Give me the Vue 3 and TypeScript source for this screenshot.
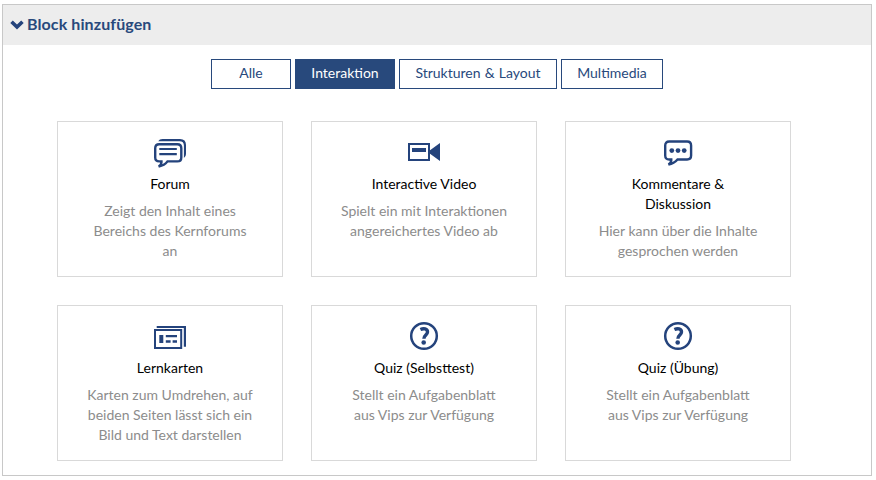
<script setup lang="ts">
import { ref } from 'vue'

type IconName = 'forum' | 'video' | 'comment' | 'cards' | 'quiz'

interface Block {
  title: string
  text: string
  icon: IconName
}

const categories: string[] = ['Alle', 'Interaktion', 'Strukturen & Layout', 'Multimedia']
const active = ref<string>('Interaktion')

const blocks: Block[] = [
  { title: 'Forum', text: 'Zeigt den Inhalt eines Bereichs des Kernforums an', icon: 'forum' },
  { title: 'Interactive Video', text: 'Spielt ein mit Interaktionen angereichertes Video ab', icon: 'video' },
  { title: 'Kommentare & Diskussion', text: 'Hier kann über die Inhalte gesprochen werden', icon: 'comment' },
  { title: 'Lernkarten', text: 'Karten zum Umdrehen, auf beiden Seiten lässt sich ein Bild und Text darstellen', icon: 'cards' },
  { title: 'Quiz (Selbsttest)', text: 'Stellt ein Aufgabenblatt aus Vips zur Verfügung', icon: 'quiz' },
  { title: 'Quiz (Übung)', text: 'Stellt ein Aufgabenblatt aus Vips zur Verfügung', icon: 'quiz' },
]
</script>

<template>
  <section class="panel">
    <header class="panel-header">
      <svg class="chevron" viewBox="0 0 14 10" aria-hidden="true">
        <path d="M0.3 3.1 L2.8 0.6 L7 4.5 L11.2 0.6 L13.7 3.1 L7 9.4 Z" />
      </svg>
      <h1>Block hinzufügen</h1>
    </header>

    <nav class="filters">
      <button
        v-for="category in categories"
        :key="category"
        type="button"
        class="filter"
        :class="{ active: category === active }"
        @click="active = category"
      >{{ category }}</button>
    </nav>

    <div class="grid">
      <article v-for="block in blocks" :key="block.title" class="card">
        <svg class="icon" viewBox="0 0 32 32" aria-hidden="true">
          <g v-if="block.icon === 'forum'">
            <path class="line bold" d="M5.2 7.2 H23.3 Q27.3 7.2 27.3 11.2 V20.4 Q27.3 24.4 23.3 24.4 H13.5 Q10.5 28.5 4.7 29.6 Q7.7 27.5 7.5 24.4 H5.2 Q1.2 24.4 1.2 20.4 V11.2 Q1.2 7.2 5.2 7.2 Z" />
            <path class="solid" d="M4.2 4.2 Q5.5 2 8.5 2 H26 Q32 2 32 8 V17 Q32 19.8 29.9 21 V8.5 Q29.9 4.2 25.5 4.2 Z" />
            <path class="solid" d="M5.3 10.9 H22.8 V13.1 H5.3 Z M5.3 16.1 H22.8 V18.3 H5.3 Z" />
          </g>
          <g v-else-if="block.icon === 'video'">
            <path class="line" d="M1 7 H21 V23 H1 Z" />
            <path class="solid" d="M4 11 H18 V15 H4 Z M22 13.2 L32 6 V24 L22 16.8 Z" />
          </g>
          <g v-else-if="block.icon === 'comment'">
            <path class="line bold" d="M7.2 4.5 H25.1 Q29.1 4.5 29.1 8.5 V18.5 Q29.1 22.5 25.1 22.5 H15.5 Q12 26.6 6.5 27.6 Q9.5 25.5 9.3 22.5 H7.2 Q3.2 22.5 3.2 18.5 V8.5 Q3.2 4.5 7.2 4.5 Z" />
            <circle class="solid" cx="9.8" cy="13.6" r="2.4" />
            <circle class="solid" cx="16" cy="13.6" r="2.4" />
            <circle class="solid" cx="22.2" cy="13.6" r="2.4" />
          </g>
          <g v-else-if="block.icon === 'cards'">
            <path class="line" d="M1 8.9 H27.2 V27 H1 Z" />
            <path class="solid" d="M2.7 5 H32 V25.8 H29.8 V7 H2.7 Z" />
            <path class="solid" d="M5.3 14 H9.3 V22 H5.3 Z M11.8 14 H23 V16.2 H11.8 Z M11.8 19.3 H16.6 V21.7 H11.8 Z M18.6 19.3 H23 V21.7 H18.6 Z" />
          </g>
          <g v-else>
            <circle class="ring" cx="16" cy="15" r="12.8" />
            <path class="mark" d="M12.4 8.5 C15.6 7.1 19.5 7.6 19.5 10.9 C19.5 14 15.9 14 15.9 17.8" />
            <circle class="solid" cx="15.7" cy="21.5" r="2.3" />
          </g>
        </svg>
        <h2>{{ block.title }}</h2>
        <p>{{ block.text }}</p>
      </article>
    </div>
  </section>
</template>

<style>
body {
  margin: 0;
  background: #fff;
}
</style>

<style scoped>
.panel {
  box-sizing: border-box;
  width: 870px;
  height: 472px;
  margin: 4px 0 0 2px;
  border: 1px solid #c8c8c8;
  font-family: Lato, "Liberation Sans", sans-serif;
  font-size: 14px;
  line-height: 20px;
  color: #000;
}
.panel-header {
  display: flex;
  align-items: center;
  height: 40px;
  padding-left: 7px;
  background: #ededed;
}
.chevron {
  width: 14px;
  height: 10px;
  fill: #24437c;
}
h1 {
  margin: 0 0 0 3px;
  padding-bottom: 2px;
  font-size: 16px;
  line-height: 20px;
  font-weight: 700;
  letter-spacing: 0.1px;
  color: #28497c;
}
.filters {
  display: flex;
  justify-content: center;
  gap: 4px;
  margin-top: 14px;
}
.filter {
  box-sizing: border-box;
  width: 80px;
  height: 30px;
  padding: 0 0 2px;
  border: 1px solid #28497c;
  background: #fff;
  color: #28497c;
  font: inherit;
  white-space: nowrap;
  cursor: pointer;
}
.filter:nth-child(2) {
  width: 100px;
}
.filter:nth-child(3) {
  width: 158px;
  word-spacing: 0.6px;
}
.filter:nth-child(4) {
  width: 102px;
}
.filter.active {
  background: #28497c;
  color: #fff;
}
.grid {
  display: grid;
  grid-template-columns: repeat(3, 226px);
  grid-auto-rows: 156px;
  gap: 28px;
  padding: 32px 0 0 54px;
}
.card {
  box-sizing: border-box;
  display: flex;
  flex-direction: column;
  align-items: center;
  padding-top: 15px;
  border: 1px solid #d9d9d9;
  text-align: center;
}
.icon {
  width: 32px;
  height: 32px;
}
.solid {
  fill: #24437c;
}
.line {
  fill: none;
  stroke: #24437c;
  stroke-width: 2;
}
.line.bold {
  stroke-width: 2.4;
}
.ring {
  fill: none;
  stroke: #24437c;
  stroke-width: 2.5;
}
.mark {
  fill: none;
  stroke: #24437c;
  stroke-width: 3.4;
}
h2 {
  max-width: 150px;
  margin: 5px 0 0;
  font-size: 14px;
  line-height: 20px;
  font-weight: 400;
}
p {
  width: 167px;
  margin: 7px 0 0;
  color: #8c8c8c;
}
</style>
